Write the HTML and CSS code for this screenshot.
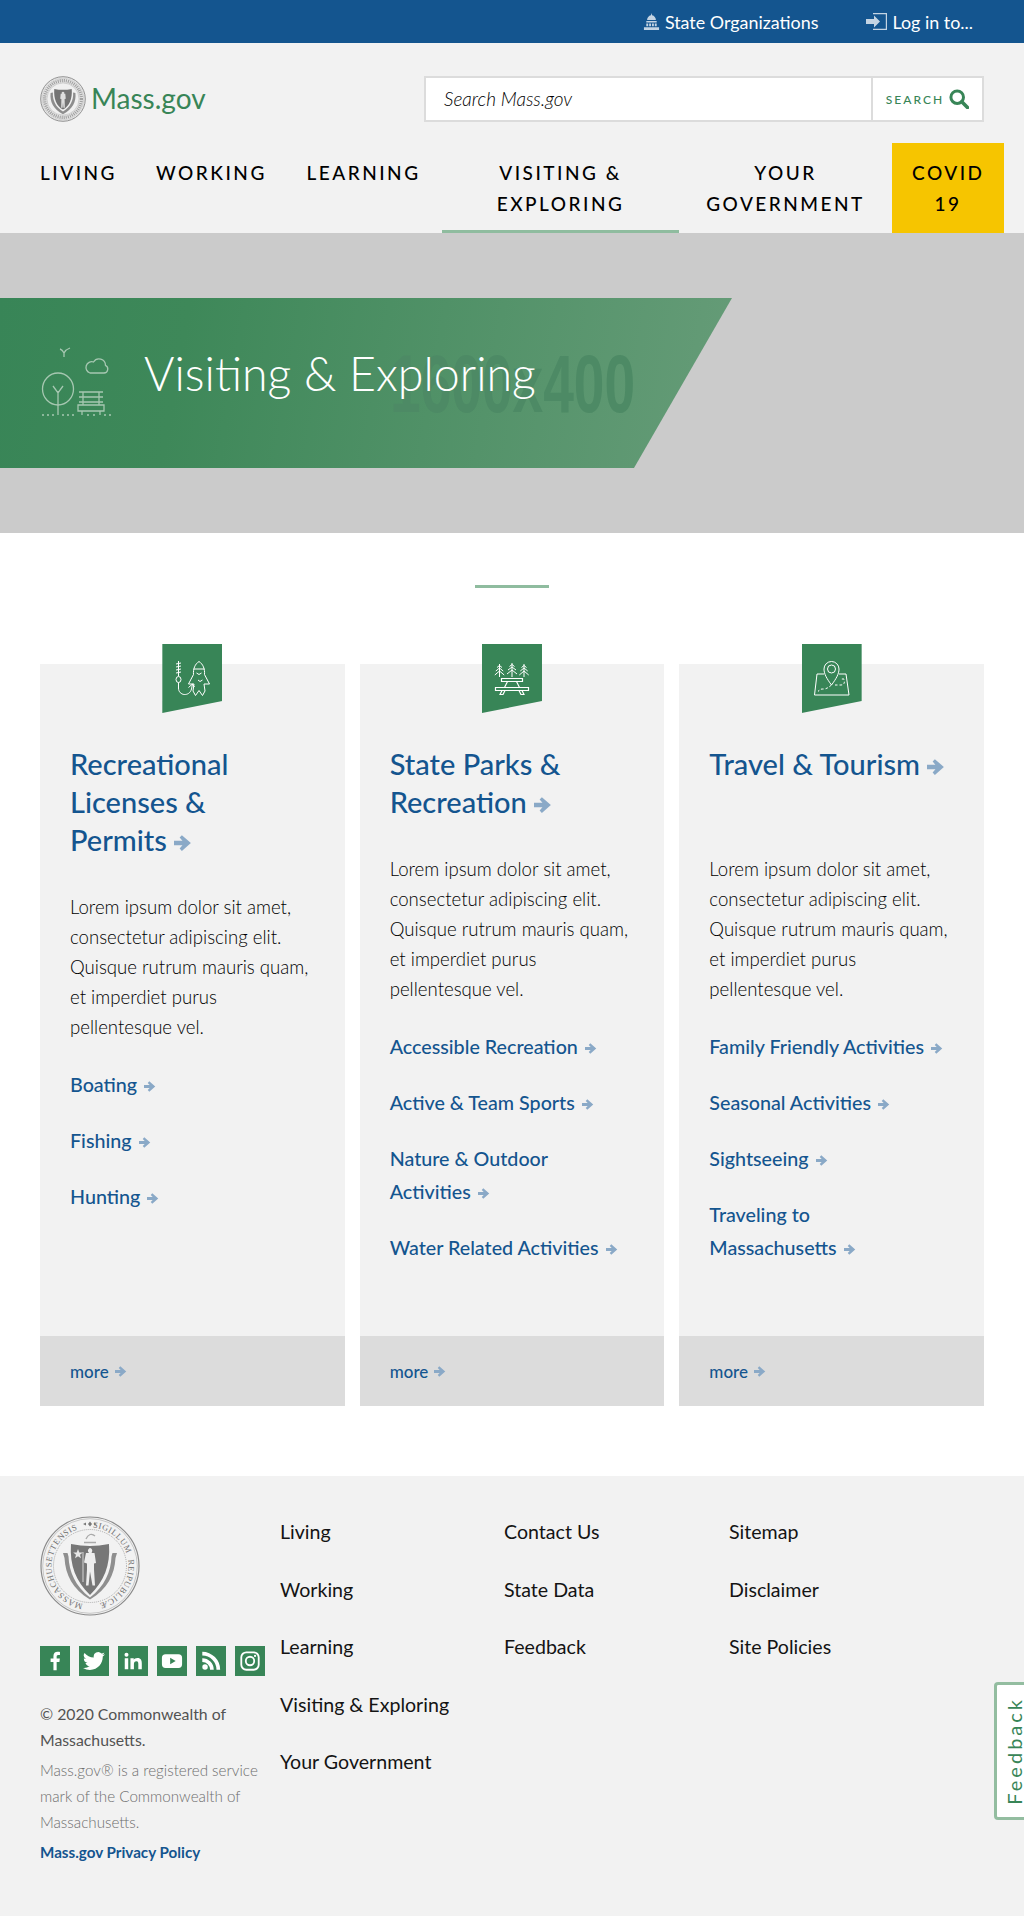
FILE: index.html
```html
<!DOCTYPE html>
<html lang="en">
<head>
    <meta charset="UTF-8">
    <meta name="viewport" content="width=device-width, initial-scale=1.0">
    <title>Visiting &amp; Exploring | Mass.gov</title>
    <link rel="stylesheet" href="styles.css">
</head>
<body>
    <svg class="defs" width="0" height="0" aria-hidden="true">
        <defs>
            <symbol id="arrow" viewBox="0 0 16 14">
                <path d="M0 5h7.500L5 2.200 7 0l8 7-8 7-2-2.200L7.500 9H0z"/>
            </symbol>
            <symbol id="seal-small" viewBox="0 0 100 100">
                <circle cx="50" cy="50" r="48.500" fill="#e6e6e6" stroke="#8a8a8a" stroke-width="2"/>
                <circle cx="50" cy="50" r="45" fill="none" stroke="#bdbdbd" stroke-width="1"/>
                <circle cx="50" cy="50" r="40" fill="none" stroke="#a2a2a2" stroke-width="7" stroke-dasharray="2.500 2"/>
                <circle cx="50" cy="50" r="35" fill="#f0f0f0" stroke="#aaa" stroke-width="1"/>
                <path d="M31 28c13 2.500 25 2.500 38 0 1.500 22-5 37-19 45-14-8-20.500-23-19-45z" fill="#747474"/>
                <path d="M23 37l5-1c-1 17 6 32 22 41 16-9 23-24 22-41l5 1c2 19-6 35-27 46-21-11-29-27-27-46z" fill="#8d8d8d"/>
                <path d="M50 34a3 3 0 012.500 4.500H55l1 11-2.500.500.500 19h-3l-1-12-1 12h-3l.500-19-2.500-.500 1-11h2.500A3 3 0 0150 34z" fill="#dedede"/>
            </symbol>
        </defs>
    </svg>

    <div class="topbar">
        <a class="topbar-link" href="#">
            <svg class="topbar-icon" viewBox="0 0 18 18" width="17" height="17"><path fill="#c4d4e3" d="M9 0l.6 2.500C12 3 13.500 5 13.700 7.500H4.300C4.500 5 6 3 8.400 2.500zM3.500 8.500h11v1.500h-11zM3.500 11h2v3h-2zm3 0h2v3h-2zm3 0h2v3h-2zm3 0h2v3h-2zM1 15h16v3H1z"/></svg>
            State Organizations
        </a>
        <a class="topbar-link" href="#">
            <svg class="topbar-icon" viewBox="0 0 21 17" width="21" height="17"><path fill="#c4d4e3" d="M0 6h8V2.500L14 8.500l-6 6V11H0z"/><path fill="none" stroke="#c4d4e3" stroke-width="1.200" d="M7 .6h13.400v15.800H7"/></svg>
            Log in to...
        </a>
    </div>

    <header class="site-header">
        <div class="brand-row">
            <a class="brand" href="#">
                <svg class="brand-seal" width="46" height="46"><use href="#seal-small"/></svg>
                <span class="brand-name">Mass.gov</span>
            </a>
            <form class="search">
                <span class="search-input">Search Mass.gov</span>
                <span class="search-btn">
                    SEARCH
                    <svg viewBox="0 0 20 20" width="20" height="20"><circle cx="8.200" cy="8.200" r="6.300" fill="none" stroke="#388557" stroke-width="3"/><path d="M12.800 12.800l5.700 5.700" stroke="#388557" stroke-width="3.600" stroke-linecap="round"/></svg>
                </span>
            </form>
        </div>
        <nav class="main-nav">
            <a class="nav-item nav-living" href="#">Living</a>
            <a class="nav-item nav-working" href="#">Working</a>
            <a class="nav-item nav-learning" href="#">Learning</a>
            <a class="nav-item nav-visiting active" href="#">Visiting &amp;<br>Exploring</a>
            <a class="nav-item nav-gov" href="#">Your<br>Government</a>
            <a class="nav-item nav-covid" href="#">Covid<br>19</a>
        </nav>
    </header>

    <section class="hero">
        <div class="hero-banner">
            <span class="hero-ghost">1600x400</span>
            <svg class="hero-icon" viewBox="0 0 72 70" width="72" height="70" fill="none" stroke="#a6c7b1" stroke-width="1.300">
                <path d="M19 2c2 .5 3 2 4 4 1-2 3-4 6-5M23 6v4"/>
                <path d="M49 26h14a4 4 0 001.500-7.600A6.500 6.500 0 0052.500 15 5.600 5.600 0 0049 26z"/>
                <ellipse cx="17" cy="42" rx="15.500" ry="16"/>
                <path d="M17 68V44M12 39l5 7 5-7"/>
                <path d="M42 45v13M58 45v13M38 45h24M38 50h24M38 55h24M37 58h26v6H37zM41 64v4M59 64v4"/>
                <path d="M2 69v-2M7 69v-2M12 69v-2M22 69v-2M27 69v-2M32 69v-2M47 69v-2M53 69v-2M64 69v-2M69 69v-2" stroke-width="1.500"/>
            </svg>
            <h1 class="hero-title">Visiting &amp; Exploring</h1>
        </div>
    </section>

    <main class="content">
        <div class="divider"></div>
        <div class="cards">
            <article class="card">
                <div class="flag">
                    <svg viewBox="0 0 36 35" width="36" height="35" fill="none" stroke="#fff" stroke-width="1">
                        <path d="M4.500 0v15M2 3l5-1M2 6l5-1M2 9l5-1M2 12l5-1"/>
                        <ellipse cx="4.500" cy="18.500" rx="2.500" ry="3"/>
                        <path d="M4.500 21.500V27c0 8 11 9 13 1l1-5M18.500 23l-4 3.500M18.500 23l2 3"/>
                        <path d="M25 .5c4 2.500 6 7.500 5.500 13l5 9.500h-5.500l1 7-2.500 4.500-3.500-5-3.500 5-2.500-4.500 1-7h-5.500l5-9.500C19 8 21 3 25 .5zM19.500 8h11M22.500 12l2.500 1.500 2.500-1.500M24 19l2 1.500 2.500-1.500"/>
                    </svg>
                </div>
                <h2 class="card-title"><a href="#">Recreational Licenses &amp; <span class="nowrap">Permits <svg class="arrow arrow-lg"><use href="#arrow"/></svg></span></a></h2>
                <p class="card-text">Lorem ipsum dolor sit amet, consectetur adipiscing elit. Quisque rutrum mauris quam, et imperdiet purus pellentesque vel.</p>
                <ul class="card-links">
                    <li><a href="#">Boating <svg class="arrow"><use href="#arrow"/></svg></a></li>
                    <li><a href="#">Fishing <svg class="arrow"><use href="#arrow"/></svg></a></li>
                    <li><a href="#">Hunting <svg class="arrow"><use href="#arrow"/></svg></a></li>
                </ul>
                <a class="card-more" href="#">more <svg class="arrow"><use href="#arrow"/></svg></a>
            </article>

            <article class="card">
                <div class="flag">
                    <svg class="flag-icon-low" viewBox="0 0 36 32" width="36" height="32" fill="none" stroke="#fff" stroke-width="1.200">
                        <path d="M5.500 1v13M3 4.500l2.500-2 2.500 2M1.800 8l3.700-3 3.700 3M.8 12l4.700-4 4.700 4M18 0v14M15.500 3.500L18 1.500l2.500 2M14 7l4-3 4 3M13 11l5-4 5 4M30 1v13M27.500 4.500l2.500-2 2.500 2M26.300 8L30 5l3.700 3M25.300 12l4.700-4 4.700 4" stroke-width="1"/>
                        <path d="M7.500 15.500h21v3h-21zM1.500 24.500h33v3h-33zM13.500 18.500l-3 6M22.500 18.500l3 6M8 27.500l-2 4h3l2-4M25 27.500l2 4h3l-2-4"/>
                    </svg>
                </div>
                <h2 class="card-title"><a href="#">State Parks &amp; <span class="nowrap">Recreation <svg class="arrow arrow-lg"><use href="#arrow"/></svg></span></a></h2>
                <p class="card-text">Lorem ipsum dolor sit amet, consectetur adipiscing elit. Quisque rutrum mauris quam, et imperdiet purus pellentesque vel.</p>
                <ul class="card-links">
                    <li><a href="#">Accessible Recreation <svg class="arrow"><use href="#arrow"/></svg></a></li>
                    <li><a href="#">Active &amp; Team Sports <svg class="arrow"><use href="#arrow"/></svg></a></li>
                    <li><a href="#">Nature &amp; Outdoor <span class="nowrap">Activities <svg class="arrow"><use href="#arrow"/></svg></span></a></li>
                    <li><a href="#">Water Related Activities <svg class="arrow"><use href="#arrow"/></svg></a></li>
                </ul>
                <a class="card-more" href="#">more <svg class="arrow"><use href="#arrow"/></svg></a>
            </article>

            <article class="card">
                <div class="flag">
                    <svg viewBox="0 0 36 35" width="36" height="35" fill="none" stroke="#fff" stroke-width="1">
                        <path d="M17.500 24c-4.500-6-7.500-11-7.500-16a7.500 7.500 0 0115 0c0 5-3 10-7.500 16z"/>
                        <circle cx="17.500" cy="8" r="4"/>
                        <path d="M10 13H3L.5 34h34.500L32 13h-7"/>
                        <path d="M17.500 24c-3 2.500-5 4-8 4s-5 .5-5 2.500M21 24h6c3 0 4-2 3-6h-3" stroke-dasharray="2.500 2"/>
                    </svg>
                </div>
                <h2 class="card-title"><a href="#">Travel &amp; Tourism <svg class="arrow arrow-lg"><use href="#arrow"/></svg></a></h2>
                <p class="card-text">Lorem ipsum dolor sit amet, consectetur adipiscing elit. Quisque rutrum mauris quam, et imperdiet purus pellentesque vel.</p>
                <ul class="card-links">
                    <li><a href="#">Family Friendly Activities <svg class="arrow"><use href="#arrow"/></svg></a></li>
                    <li><a href="#">Seasonal Activities <svg class="arrow"><use href="#arrow"/></svg></a></li>
                    <li><a href="#">Sightseeing <svg class="arrow"><use href="#arrow"/></svg></a></li>
                    <li><a href="#">Traveling to <span class="nowrap">Massachusetts <svg class="arrow"><use href="#arrow"/></svg></span></a></li>
                </ul>
                <a class="card-more" href="#">more <svg class="arrow"><use href="#arrow"/></svg></a>
            </article>
        </div>
    </main>

    <footer class="site-footer">
        <div class="footer-left">
            <svg class="footer-seal" viewBox="0 0 100 100" width="100" height="100">
                <defs>
                    <path id="seal-ring" d="M50 88.500a38.500 38.500 0 110-77 38.500 38.500 0 110 77"/>
                </defs>
                <circle cx="50" cy="50" r="49" fill="none" stroke="#8a8a8a" stroke-width="1.200"/>
                <circle cx="50" cy="50" r="47.300" fill="none" stroke="#aaa" stroke-width=".6"/>
                <circle cx="50" cy="50" r="36.500" fill="none" stroke="#aaa" stroke-width="1" stroke-dasharray="1 1"/>
                <text class="seal-text"><textPath href="#seal-ring" startOffset="7">MASSACHUSETTENSIS<tspan dx="15">SIGILLUM</tspan><tspan dx="6">REIPUBLICÆ</tspan></textPath></text>
                <path d="M43 8l3-1.500v3zM57 8l-3-1.500v3zM50 5.500l2 2.500-2 2.500-2-2.500z" fill="#777"/>
                <path d="M31 28c13 2.500 25 2.500 38 0 1.500 22-5 37-19 51-14-14-20.500-29-19-51z" fill="#777"/>
                <path d="M23 37h4.500l1 3.500c.5 15 7 30 21.500 41 14.500-11 21-26 21.500-41l1-3.500H77l-1.500 5c-1 17-8 31-25.500 41.500C32.500 73 25.500 59 24.500 42z" fill="#8f8f8f"/>
                <path d="M38 33l1.300 3.500h3.500l-2.800 2.200 1 3.500-3-2-3 2 1-3.500-2.800-2.200h3.500z" fill="#e8e8e8"/>
                <path d="M49.500 32a2.800 2.800 0 012.500 4l-.5 1h3l1.500 10-2 .5v6l1 16h-2.500l-2.500-14-1.500 14H46l1-16v-6l-3-1 2-9.500h3l-1-1.500a2.800 2.800 0 012.500-3.500z" fill="#eee"/>
                <path d="M43 36v30" stroke="#eee" stroke-width=".8"/>
                <path d="M44 26.500h12M46 23c2-5 6-6 9-3" fill="none" stroke="#aaa" stroke-width="1.300"/>
            </svg>
            <div class="socials">
                <a class="social" href="#" aria-label="Facebook"><svg viewBox="0 0 24 24"><path d="M13.800 22v-9h3l.5-3.600h-3.500V7.200c0-1 .3-1.800 1.800-1.800h1.800V2.200C17 2.100 16 2 14.800 2c-2.700 0-4.500 1.600-4.500 4.600v2.800H7.200V13h3.100v9z"/></svg></a>
                <a class="social" href="#" aria-label="Twitter"><svg viewBox="0 0 24 24"><path d="M23.950 4.570a10 10 0 01-2.820.77 4.960 4.960 0 002.160-2.720c-.95.550-2 .960-3.130 1.200a4.920 4.920 0 00-8.380 4.480C7.690 8.100 4.070 6.130 1.640 3.160a4.920 4.920 0 001.520 6.570 4.900 4.900 0 01-2.230-.61v.06a4.920 4.920 0 003.950 4.830 5 5 0 01-2.210.08 4.930 4.930 0 004.600 3.420A9.870 9.870 0 010 19.540a14 14 0 007.550 2.210c9.050 0 14-7.500 14-14 0-.21 0-.42-.02-.63a9.940 9.940 0 002.460-2.550z"/></svg></a>
                <a class="social" href="#" aria-label="LinkedIn"><svg viewBox="0 0 24 24"><path d="M3 9h3.800v12H3zM4.900 3a2.200 2.200 0 110 4.400 2.200 2.200 0 010-4.400zM9.200 9h3.600v1.700c.6-1.100 2-2 4-2 4 0 4.800 2.600 4.800 6V21h-3.800v-5.600c0-1.400 0-3.200-2-3.200s-2.800 1.500-2.800 3.100V21H9.200z"/></svg></a>
                <a class="social" href="#" aria-label="YouTube"><svg viewBox="0 0 24 24"><path fill-rule="evenodd" d="M5 4.500h14a4 4 0 014 4v7a4 4 0 01-4 4H5a4 4 0 01-4-4v-7a4 4 0 014-4zM10 8.500v7l6-3.500z"/></svg></a>
                <a class="social" href="#" aria-label="RSS"><svg viewBox="0 0 24 24"><circle cx="5.500" cy="18.500" r="3"/><path d="M2.500 9v4a8.500 8.500 0 018.500 8.500h4A12.500 12.500 0 002.500 9z"/><path d="M2.500 2v4A15.500 15.500 0 0118 21.500h4A19.500 19.500 0 002.500 2z"/></svg></a>
                <a class="social" href="#" aria-label="Instagram"><svg viewBox="0 0 24 24" fill="none" stroke="#fff" stroke-width="2"><rect x="2.500" y="2.500" width="19" height="19" rx="5.500"/><circle cx="12" cy="12" r="4.600"/><circle cx="17.500" cy="6.500" r="1.200" fill="#fff" stroke="none"/></svg></a>
            </div>
            <p class="copyright">© 2020 Commonwealth of Massachusetts.</p>
            <p class="trademark">Mass.gov® is a registered service mark of the Commonwealth of Massachusetts.</p>
            <a class="privacy" href="#">Mass.gov Privacy Policy</a>
        </div>
        <ul class="footer-col">
            <li><a href="#">Living</a></li>
            <li><a href="#">Working</a></li>
            <li><a href="#">Learning</a></li>
            <li><a href="#">Visiting &amp; Exploring</a></li>
            <li><a href="#">Your Government</a></li>
        </ul>
        <ul class="footer-col footer-col-b">
            <li><a href="#">Contact Us</a></li>
            <li><a href="#">State Data</a></li>
            <li><a href="#">Feedback</a></li>
        </ul>
        <ul class="footer-col">
            <li><a href="#">Sitemap</a></li>
            <li><a href="#">Disclaimer</a></li>
            <li><a href="#">Site Policies</a></li>
        </ul>
        <a class="feedback-tab" href="#"><span>Feedback</span></a>
    </footer>
</body>
</html>
```

FILE: styles.css
```css
* {
    box-sizing: border-box;
}
html, body {
    margin: 0;
    background-color: #fff;
    color: #141414;
    font-family: "Lato", "Noto Sans", sans-serif;
}
a {
    color: inherit;
    text-decoration: none;
}
ul {
    list-style: none;
    margin: 0;
    padding: 0;
}
.defs {
    position: absolute;
}
.nowrap {
    white-space: nowrap;
}

/* top bar */
.topbar {
    height: 43px;
    background-color: #14558f;
    display: flex;
    justify-content: flex-end;
    align-items: center;
    gap: 48px;
    padding-right: 51px;
}
.topbar-link {
    display: flex;
    align-items: center;
    gap: 5px;
    color: #fff;
    font-size: 17.900px;
}

/* header */
.site-header {
    background-color: #f2f2f2;
    height: 190px;
}
.brand-row {
    display: flex;
    justify-content: space-between;
    align-items: center;
    padding: 33px 40px 0;
    height: 79px;
}
.brand {
    display: flex;
    align-items: center;
    gap: 5px;
}
.brand-name {
    margin-top: -2px;
    color: #388557;
    font-size: 28px;
}
.search {
    display: flex;
    width: 560px;
    height: 46px;
    border: 2px solid #dcdcdc;
    background-color: #fff;
}
.search-input {
    flex: 1;
    display: flex;
    align-items: center;
    padding: 0 0 2px 18px;
    color: #000;
    font-size: 19px;
    font-style: italic;
    font-weight: 300;
}
.search-btn {
    width: 111px;
    border-left: 2px solid #dcdcdc;
    display: flex;
    align-items: center;
    justify-content: center;
    gap: 5px;
    color: #388557;
    font-size: 12px;
    font-weight: 500;
    letter-spacing: 2px;
}
.main-nav {
    display: flex;
    height: 111px;
    padding: 21px 20px 0;
    color: #000;
}
.nav-item {
    display: block;
    padding: 14px 20px 0;
    font-size: 19px;
    line-height: 31px;
    font-weight: 500;
    letter-spacing: 2.500px;
    text-transform: uppercase;
    text-align: center;
    height: 90px;
}
.nav-living {
    width: 116px;
}
.nav-working {
    width: 149px;
}
.nav-learning {
    width: 157px;
}
.nav-visiting {
    width: 237px;
}
.nav-gov {
    width: 213px;
}
.nav-covid {
    width: 112px;
    background-color: #f6c500;
}
.nav-item.active {
    border-bottom: 3px solid #8fbc9f;
}

/* hero */
.hero {
    height: 300px;
    background-color: #cbcbcb;
    padding-top: 65px;
}
.hero-banner {
    position: relative;
    height: 170px;
    width: 732px;
    display: flex;
    align-items: flex-start;
    gap: 31px;
    padding: 49px 0 0 41px;
    background: linear-gradient(100deg, #388557 0%, #3e8859 25%, #669c78 100%);
    clip-path: polygon(0 0, 100% 0, 634px 100%, 0 100%);
}
.hero-ghost {
    position: absolute;
    left: 390px;
    top: 46px;
    color: #4d8a65;
    font-family: "Liberation Sans", sans-serif;
    font-size: 81px;
    font-weight: 700;
    line-height: 80px;
    white-space: nowrap;
    transform: scaleX(.68);
    transform-origin: left center;
}
.hero-icon {
    position: relative;
}
.hero-title {
    position: relative;
    margin: -2px 0 0;
    color: #fff;
    font-size: 46.500px;
    font-weight: 300;
    line-height: 56px;
}

/* cards */
.content {
    padding: 52px 40px 70px;
}
.divider {
    width: 74px;
    height: 3px;
    margin: 0 auto 76px;
    background-color: #8fbc9f;
}
.cards {
    display: grid;
    grid-template-columns: repeat(3, 1fr);
    gap: 15px;
}
.card {
    position: relative;
    display: flex;
    flex-direction: column;
    background-color: #f2f2f2;
    padding: 81px 30px 0;
}
.flag {
    position: absolute;
    top: -20px;
    left: 50%;
    width: 60px;
    height: 69px;
    margin-left: -30px;
    padding-top: 17px;
    display: flex;
    justify-content: center;
    align-items: flex-start;
    background-color: #388557;
    clip-path: polygon(0 0, 100% 0, 100% 57px, 0 100%);
}
.flag-icon-low {
    margin-top: 2px;
}
.card-title {
    margin: 0 0 33px;
    min-height: 76px;
    color: #14558f;
    font-size: 29px;
    line-height: 38px;
    font-weight: 500;
}
.card-text {
    margin: 0 0 26px;
    color: #000;
    font-size: 18.600px;
    line-height: 30px;
    font-weight: 300;
}
.card-links {
    display: flex;
    flex-direction: column;
    gap: 23px;
    padding-bottom: 72px;
    color: #14558f;
    font-size: 19.700px;
    line-height: 33px;
    font-weight: 500;
}
.arrow {
    width: 12px;
    height: 11px;
    margin-left: 2px;
    fill: #8aa9c7;
}
.arrow-lg {
    width: 18px;
    height: 16px;
    margin-left: 0;
}
.card-more {
    margin: auto -30px 0;
    height: 70px;
    padding: 0 30px;
    display: flex;
    align-items: center;
    gap: 4px;
    background-color: #dcdcdc;
    color: #14558f;
    font-size: 17px;
    font-weight: 500;
}

/* footer */
.site-footer {
    position: relative;
    height: 440px;
    background-color: #f2f2f2;
    display: flex;
    padding: 40px 40px 0;
}
.footer-left {
    width: 240px;
    font-size: 15.200px;
}
.footer-seal {
    display: block;
    margin-bottom: 30px;
}
.seal-text {
    fill: #707070;
    font-family: "Liberation Serif", serif;
    font-size: 8.500px;
    letter-spacing: .6px;
}
.socials {
    display: flex;
    gap: 9px;
    margin-bottom: 25px;
}
.social {
    width: 30px;
    height: 30px;
    padding: 4px;
    background-color: #388557;
    display: block;
}
.social svg {
    display: block;
    width: 22px;
    height: 22px;
    fill: #fff;
}
.social svg[stroke] {
    fill: none;
}
.copyright {
    margin: 0;
    width: 225px;
    color: #535353;
    font-size: 15.800px;
    line-height: 26px;
}
.trademark {
    margin: 4px 0;
    width: 225px;
    color: #6e6e6e;
    line-height: 26px;
    font-weight: 300;
}
.privacy {
    color: #14558f;
    line-height: 26px;
    font-weight: 700;
}
.footer-col {
    width: 224px;
    font-size: 19.600px;
    line-height: 28px;
    display: flex;
    flex-direction: column;
    gap: 29.500px;
    padding-top: 2px;
}
.footer-col-b {
    width: 225px;
}
.feedback-tab {
    position: absolute;
    right: 0;
    top: 206px;
    width: 30px;
    height: 138px;
    padding-left: 7px;
    display: flex;
    align-items: center;
    background-color: #fff;
    border: 3px solid #93bda0;
    border-right: 0;
    border-radius: 4px 0 0 4px;
    color: #388557;
    font-size: 20px;
    line-height: 20px;
    letter-spacing: 3px;
}
.feedback-tab span {
    writing-mode: vertical-rl;
    transform: rotate(180deg);
}
```
